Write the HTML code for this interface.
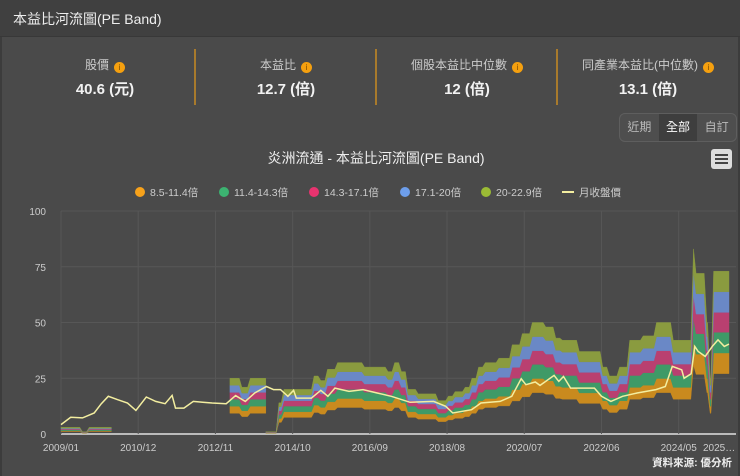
<!DOCTYPE html>
<html><head><meta charset="utf-8"><style>
*{margin:0;padding:0;box-sizing:border-box}
body{width:740px;height:476px;background:#4a4a4a;font-family:"Liberation Sans","Noto Sans CJK TC",sans-serif;color:#ddd;overflow:hidden;position:relative}
.hd{position:absolute;left:0;top:0;width:740px;height:37px;background:#404040;border-bottom:1px solid #383838}
.hd span{position:absolute;left:13px;top:9px;font-size:14px;color:#eee}
.frame{position:absolute;left:0;top:37px;width:740px;height:439px;border-left:2px solid #3c3c3c;border-right:2px solid #3c3c3c}
.st{position:absolute;top:56px;width:180px;text-align:center}
.st .l{font-size:12px;color:#ccc;height:18px}
.st .v{font-size:15px;font-weight:bold;color:#f2f2f2;margin-top:4px}
.i{display:inline-block;width:11px;height:11px;border-radius:50%;background:#f5a00f;vertical-align:-1px;margin-left:5px;font-size:8px;color:#7a4a00;line-height:11px;text-align:center}
.sep{position:absolute;top:49px;width:2px;height:56px;background:#a87a2c}
.btns{position:absolute;left:619px;top:113px;width:118px;height:29px;border:1px solid #5e5e5e;border-radius:6px;background:#4e4e4e;overflow:hidden;display:flex}
.btns div{flex:1;text-align:center;line-height:27px;font-size:12px;color:#bbb}
.btns .a{background:#3e3e3e;color:#fff}
.ct{position:absolute;left:0;width:752px;top:148px;text-align:center;font-size:14px;color:#eee}
.menu{position:absolute;left:711px;top:149px;width:21px;height:20px;background:#ddd;border-radius:3px}
.menu i{position:absolute;left:4px;width:13px;height:2px;background:#444}
.lg{position:absolute;top:185px;font-size:10.5px;color:#ccc;white-space:nowrap}
.lg b{display:inline-block;width:10px;height:10px;border-radius:50%;vertical-align:-1px;margin-right:5px}
svg{position:absolute;left:0;top:0}
</style></head><body>
<div class="frame"></div>
<div class="hd"><span>本益比河流圖(PE Band)</span></div>
<div class="st" style="left:15px"><div class="l">股價<span class="i">i</span></div><div class="v">40.6 (元)</div></div>
<div class="st" style="left:196px"><div class="l">本益比<span class="i">i</span></div><div class="v">12.7 (倍)</div></div>
<div class="st" style="left:377px"><div class="l">個股本益比中位數<span class="i">i</span></div><div class="v">12 (倍)</div></div>
<div class="st" style="left:558px"><div class="l">同產業本益比(中位數)<span class="i">i</span></div><div class="v">13.1 (倍)</div></div>
<div class="sep" style="left:194px"></div><div class="sep" style="left:375px"></div><div class="sep" style="left:556px"></div>
<div class="btns"><div>近期</div><div class="a">全部</div><div>自訂</div></div>
<div class="ct">炎洲流通 - 本益比河流圖(PE Band)</div>
<div class="menu"><i style="top:5px"></i><i style="top:9px"></i><i style="top:13px"></i></div>
<div class="lg" style="left:135px"><b style="background:#f7a21b"></b>8.5-11.4倍</div>
<div class="lg" style="left:219px"><b style="background:#3cb371"></b>11.4-14.3倍</div>
<div class="lg" style="left:309px"><b style="background:#e8336f"></b>14.3-17.1倍</div>
<div class="lg" style="left:400px"><b style="background:#6d9eeb"></b>17.1-20倍</div>
<div class="lg" style="left:481px"><b style="background:#9bbb35"></b>20-22.9倍</div>
<div class="lg" style="left:562px"><span style="display:inline-block;width:12px;height:2px;background:#f3eea0;vertical-align:3px;margin-right:5px"></span>月收盤價</div>
<svg id="c" width="740" height="476" font-family="Liberation Sans, sans-serif"></svg>
<div style="position:absolute;right:8px;top:455px;font-size:10.5px;color:#eee;font-weight:bold">資料來源: 優分析</div>
<script>
var s=document.getElementById('c'),h='';
function X(m){return 61+m*3.357}function Y(v){return 434-v*2.23}
[0,25,50,75,100].forEach(function(v){h+='<line x1="61" x2="736" y1="'+Y(v)+'" y2="'+Y(v)+'" stroke="'+(v?'#575757':'#bbb')+'" stroke-width="'+(v?1:2)+'"/>';h+='<text x="46" y="'+(Y(v)+4)+'" fill="#ccc" font-size="10" text-anchor="end">'+v+'</text>'});
var lb=['2009/01','2010/12','2012/11','2014/10','2016/09','2018/08','2020/07','2022/06','2024/05'];
lb.forEach(function(t,i){var x=X(i*23);h+='<line x1="'+x+'" x2="'+x+'" y1="211" y2="434" stroke="#575757"/>';h+='<text x="'+x+'" y="451" fill="#ccc" font-size="10" text-anchor="middle">'+t+'</text>'});
h+='<text x="703" y="451" fill="#ccc" font-size="10" text-anchor="start">2025…</text>';
var seg=[[0,6,3],[6,8,1],[8,15,3],[50.3,53.5,25],[53.5,56,21],[56,61,25],[61,64.5,1],[64.5,66,14],[66,75,20],[75,77,26],[77,79,24],[79,82,29],[82,90,32],[90,97,30],[97,99,28],[99,101,32],[101,103,28],[103,106,20],[106,112,18],[112,115,15],[115,117,17],[117,120,19],[120,122,21],[122,124,25],[124,126,30],[126,130,32],[130,134,34],[134,137,40],[137,140,45],[140,144,50],[144,147,48],[147,149,43],[149,154,42],[154,161,37],[161,163,30],[163,166,26],[166,169,30],[169,173,42],[173,177,44],[177,182,50],[182,188,42],[188,188.8,83],[188.8,192,72],[192,193,50],[193,194,25],[194,199,73]];
var mult=[8.5,11.4,14.3,17.1,20,22.9],col=['#c98a1e','#3f9a67','#b94070','#6a88c6','#8a9b3f'];
var groups=[[0,3],[3,6],[6,46]];
groups.forEach(function(g){var sg=seg.slice(g[0],g[1]);
var pts=[];sg.forEach(function(q,i){var a=q[0]+(i?0.4:0),b=q[1]-(i<sg.length-1?0.4:0);if(b<a){a=b=(q[0]+q[1])/2;}pts.push([a,q[2]/22.9],[b,q[2]/22.9]);});
for(var k=0;k<5;k++){var up=pts.map(function(p){return [X(p[0]),Y(p[1]*mult[k+1])]});var dn=pts.map(function(p){return [X(p[0]),Y(p[1]*mult[k])]});
var p='M'+up.map(function(a){return a[0].toFixed(1)+','+a[1].toFixed(1)}).join('L')+'L'+dn.reverse().map(function(a){return a[0].toFixed(1)+','+a[1].toFixed(1)}).join('L')+'Z';
h+='<path d="'+p+'" fill="'+col[k]+'" stroke="'+col[k]+'" stroke-width="0.4"/>';}});
var pr=[[0,4.2],[2.9,7.5],[6.4,7.2],[9.9,9.4],[12,13.6],[14.1,16.9],[16.9,15.4],[19.8,13.9],[22.3,10.6],[25.4,16.6],[28.2,14.6],[31,13.6],[33.1,17.3],[34.1,11.6],[36.6,11.6],[39.4,14.6],[42.2,14.2],[45,13.9],[49.2,13.6],[52,17.2],[54.9,14.6],[57.7,18.4],[61.2,21.3],[63.3,19.9],[65.4,19.9],[67.6,16.9],[69.3,19.6],[70.1,16.1],[74.6,16.1],[77.4,19.6],[79.5,16.9],[81.6,20.6],[85.8,19.1],[90,19.9],[94.2,18.4],[98.4,16.9],[104,14.2],[111,14.6],[114.6,12.4],[116.7,9.4],[122.3,10.9],[125.1,13.9],[130.8,14.6],[134.3,16.9],[137.1,24.8],[138.5,22.1],[141.3,23.3],[142.7,21.8],[146.9,26.3],[148.3,23.6],[149.7,25.8],[151.8,20.6],[158.9,20.6],[161,16.9],[163.8,14.6],[167.3,16.9],[171.6,18.4],[177.2,19.9],[180,21.3],[182.1,30.3],[184.9,28.8],[185.6,25],[187.7,27],[188.8,39.3],[189.8,37],[191.9,34.8],[194,39.3],[195.7,42.2],[197.6,39.3],[199,40.3]];
h+='<polyline fill="none" stroke="#f3eea0" stroke-width="1.5" points="'+pr.map(function(a){return X(a[0]).toFixed(1)+','+Y(a[1]).toFixed(1)}).join(' ')+'"/>';
s.innerHTML=h;
</script>
</body></html>
